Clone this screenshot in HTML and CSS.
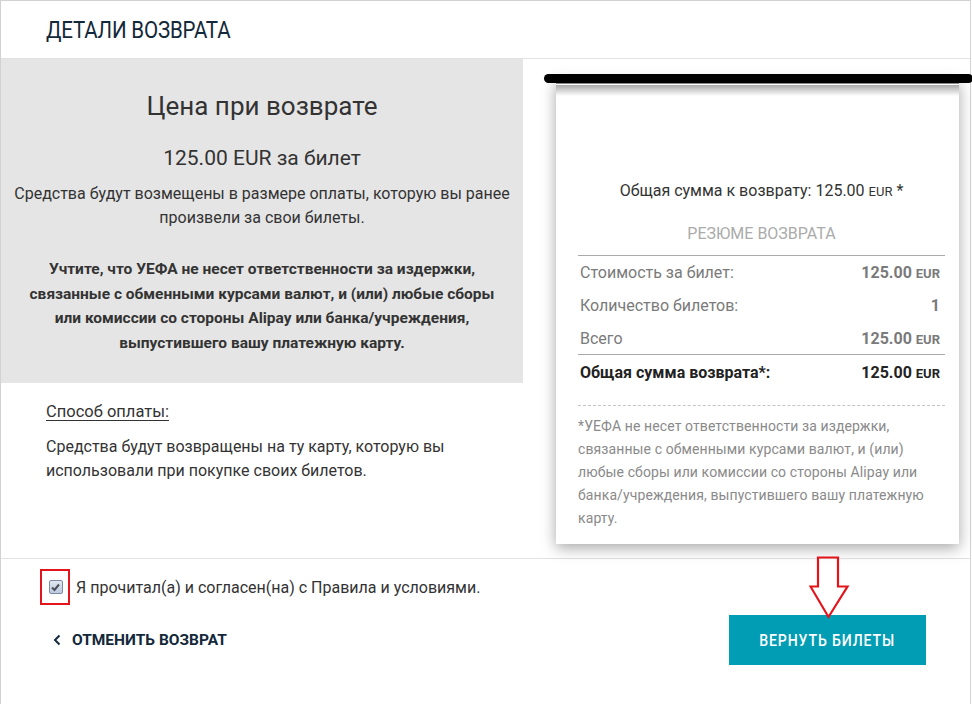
FILE: index.html
```html
<!DOCTYPE html>
<html lang="ru">
<head>
<meta charset="utf-8">
<title>Детали возврата</title>
<link rel="stylesheet" href="styles.css">
</head>
<body>
<div class="page">
  <header class="head">
    <h1 class="head-title">ДЕТАЛИ ВОЗВРАТА</h1>
  </header>
  <main class="content">
    <section class="left">
      <div class="price-box">
        <h2 class="price-title">Цена при возврате</h2>
        <p class="price-per">125.00 EUR за билет</p>
        <p class="price-note">Средства будут возмещены в размере оплаты, которую вы ранее произвели за свои билеты.</p>
        <p class="price-warn">Учтите, что УЕФА не несет ответственности за издержки, связанные с обменными курсами валют, и (или) любые сборы или комиссии со стороны Alipay или банка/учреждения, выпустившего вашу платежную карту.</p>
      </div>
      <div class="method">
        <h3 class="method-title">Способ оплаты:</h3>
        <p class="method-text">Средства будут возвращены на ту карту, которую вы использовали при покупке своих билетов.</p>
      </div>
    </section>
    <aside class="right">
      <div class="printer-bar"></div>
      <div class="receipt">
        <p class="receipt-total">Общая сумма к возврату: 125.00 <small>EUR</small> *</p>
        <p class="summary-title">РЕЗЮМЕ ВОЗВРАТА</p>
        <div class="row"><span>Стоимость за билет:</span><b>125.00 <small>EUR</small></b></div>
        <div class="row"><span>Количество билетов:</span><b>1</b></div>
        <div class="row row-sep"><span>Всего</span><b>125.00 <small>EUR</small></b></div>
        <div class="row row-final"><b>Общая сумма возврата*:</b><b>125.00 <small>EUR</small></b></div>
        <p class="footnote">*УЕФА не несет ответственности за издержки, связанные с обменными курсами валют, и (или) любые сборы или комиссии со стороны Alipay или банка/учреждения, выпустившего вашу платежную карту.</p>
      </div>
    </aside>
  </main>
  <footer class="foot">
    <div class="agree-row">
      <span class="highlight">
        <span class="checkbox">
          <svg width="11" height="11" viewBox="0 0 11 11"><path d="M2 5.5 L4.5 8 L9 2.5" fill="none" stroke="#4a4f57" stroke-width="2"/></svg>
        </span>
      </span>
      <span class="agree-text">Я прочитал(а) и согласен(на) с Правила и условиями.</span>
    </div>
    <div class="actions">
      <a class="cancel">
        <svg class="chev" width="8" height="12" viewBox="0 0 8 12"><path d="M6.5 1.5 L2 6 L6.5 10.5" fill="none" stroke="#13283a" stroke-width="2"/></svg>
        <span>ОТМЕНИТЬ ВОЗВРАТ</span>
      </a>
      <div class="btn-wrap">
        <button class="btn"><span class="btn-label">ВЕРНУТЬ БИЛЕТЫ</span></button>
        <svg class="pointer" width="42" height="64" viewBox="0 0 42 64"><path d="M9 1.5 L29 1.5 L29 30.5 L38.5 30.5 L19.5 61 L1.5 30.5 L9 30.5 Z" fill="none" stroke="#e3141c" stroke-width="2.2" stroke-linejoin="miter"/></svg>
      </div>
    </div>
  </footer>
</div>
</body>
</html>
```
FILE: styles.css
```css
* { box-sizing: border-box; }
html, body { margin: 0; padding: 0; background: #fff; }
body { font-family: Roboto, "Noto Sans", "Liberation Sans", sans-serif; color: #333; }
p, h1, h2, h3 { margin: 0; }

.page {
  width: 971px;
  height: 704px;
  border: 1px solid #d2d2d2;
  border-bottom: none;
}

.head {
  height: 58px;
  display: flex;
  align-items: center;
  padding-left: 45px;
  border-bottom: 1px solid #e2e2e2;
}
.head-title {
  display: inline-block;
  font-size: 24px;
  font-weight: 400;
  color: #13283a;
  letter-spacing: -0.2px;
  transform: scaleX(0.855);
  transform-origin: left center;
}

.content { display: flex; }

.left { width: 522px; flex: none; }
.price-box {
  background: #e5e5e5;
  height: 324px;
  padding: 30px 12px 0;
  text-align: center;
}
.price-title { font-size: 26px; line-height: 34px; font-weight: 400; color: #333; }
.price-per { font-size: 21px; line-height: 24px; margin-top: 23px; }
.price-note { font-size: 16px; line-height: 24px; margin-top: 12px; }
.price-warn { font-size: 15.5px; line-height: 24.5px; font-weight: 700; margin-top: 27px; padding: 0 12px; }

.method { padding: 18px 40px 0 45px; }
.method-title { font-size: 16.5px; line-height: 22px; font-weight: 400; text-decoration: underline; text-underline-offset: 3px; }
.method-text { font-size: 16px; line-height: 24px; margin-top: 12px; }

.right { flex: 1; padding-top: 15px; padding-bottom: 14px; }
.printer-bar {
  position: relative;
  z-index: 2;
  height: 9px;
  background: #000;
  border-radius: 5px;
  margin-left: 21px;
  margin-right: -3px;
}
.receipt {
  position: relative;
  margin: -4px 11px 0 33px;
  background: #fff;
  box-shadow: 0 4px 14px rgba(0, 0, 0, 0.35);
  padding: 100px 14px 14px 22px;
}
.receipt::before {
  content: "";
  position: absolute;
  left: 0; right: 0; top: 0;
  height: 17px;
  background: linear-gradient(to bottom, #777 0, #888 5px, #fff 5px, #fff 6px, #aaa 6px, #fff 17px);
}
.receipt small { font-size: 13px; }
.receipt-total { text-align: center; font-size: 16px; line-height: 24px; color: #333; }
.summary-title {
  text-align: center;
  font-size: 16px;
  line-height: 24px;
  color: #ababab;
  margin-top: 18px;
  padding-bottom: 9px;
  border-bottom: 1px solid #aaa;
}
.row {
  height: 33px;
  display: flex;
  align-items: center;
  justify-content: space-between;
  padding: 0 5px 0 2px;
  font-size: 16px;
  color: #7a7a7a;
}
.row b { font-weight: 700; }
.row-sep { border-bottom: 1px solid #aaa; }
.row-final { color: #222; height: 34px; }
.footnote {
  margin-top: 16px;
  border-top: 1px dashed #c4c4c4;
  padding-top: 9px;
  font-size: 14px;
  line-height: 23px;
  letter-spacing: 0.1px;
  color: #8a8a8a;
}

.foot {
  border-top: 1px solid #e2e2e2;
  padding: 10px 44px 0 39px;
}
.agree-row { display: flex; align-items: center; gap: 6px; }
.highlight {
  width: 30px;
  height: 36px;
  border: 2px solid #e3141c;
  display: flex;
  align-items: center;
  justify-content: center;
  padding-left: 1px;
}
.checkbox {
  width: 14px;
  height: 14px;
  border: 1px solid #7d8ba3;
  border-radius: 2px;
  background: linear-gradient(#dfe6f1, #bccadf);
  display: flex;
  align-items: center;
  justify-content: center;
}
.agree-text { font-size: 16px; color: #333; }

.actions {
  display: flex;
  justify-content: space-between;
  align-items: center;
  margin-top: 10px;
  padding-left: 13px;
}
.cancel {
  display: flex;
  align-items: center;
  gap: 11px;
  font-size: 15.5px;
  font-weight: 700;
  color: #13283a;
}
.btn-wrap { position: relative; }
.btn {
  display: flex;
  align-items: center;
  justify-content: center;
  width: 197px;
  height: 50px;
  border: none;
  background: #009db5;
  color: #fff;
  font-family: Roboto, "Noto Sans", sans-serif;
  font-size: 16px;
  font-weight: 500;
}
.btn-label {
  display: inline-block;
  letter-spacing: 1px;
  transform: scaleX(0.88);
}
.pointer {
  position: absolute;
  left: 80px;
  top: -59px;
}
```
